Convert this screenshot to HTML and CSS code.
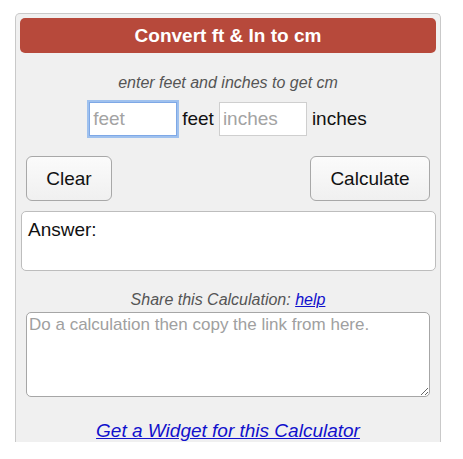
FILE: index.html
```html
<!DOCTYPE html>
<html lang="en">
<head>
<meta charset="utf-8">
<title>Convert ft &amp; in to cm</title>
<link rel="stylesheet" href="styles.css">
</head>
<body>
<div class="panel">
  <div class="title">Convert ft &amp; In to cm</div>
  <div class="hint">enter feet and inches to get cm</div>
  <div class="inputs">
    <input class="field focused" type="text" placeholder="feet">
    <span class="unit">feet</span>
    <input class="field" type="text" placeholder="inches">
    <span class="unit">inches</span>
  </div>
  <div class="buttons">
    <button class="btn btn-clear" type="button">Clear</button>
    <button class="btn btn-calc" type="button">Calculate</button>
  </div>
  <div class="answer">Answer:</div>
  <div class="share">Share this Calculation: <a href="#" class="link">help</a></div>
  <textarea class="sharebox" placeholder="Do a calculation then copy the link from here."></textarea>
  <div class="widget"><a href="#" class="link">Get a Widget for this Calculator</a></div>
</div>
</body>
</html>
```

FILE: styles.css
```css
html, body {
  margin: 0;
  padding: 0;
  background: #ffffff;
}

body {
  font-family: "Liberation Sans", Arial, Helvetica, sans-serif;
  color: #111;
}

.panel {
  box-sizing: border-box;
  margin: 13px 0 0 15px;
  width: 426px;
  height: 429px;
  padding: 4px;
  background: #f0f0f0;
  border: 1px solid #c9c9c9;
  border-bottom: none;
  border-radius: 5px 5px 0 0;
  overflow: hidden;
  display: flex;
  flex-direction: column;
}

.title {
  flex: none;
  height: 35px;
  line-height: 35px;
  background: #b7493b;
  border-radius: 5px;
  color: #ffffff;
  font-weight: bold;
  font-size: 19px;
  text-align: center;
}

.hint {
  flex: none;
  margin-top: 21px;
  font-size: 16px;
  line-height: 18px;
  font-style: italic;
  color: #555;
  text-align: center;
}

.inputs {
  margin-top: 10px;
  display: flex;
  justify-content: center;
  align-items: center;
  gap: 5px;
  height: 34px;
  flex: none;
}

.field {
  box-sizing: border-box;
  width: 88px;
  height: 34px;
  padding: 0 3px;
  border: 1px solid #cfcfcf;
  background: #fff;
  font-family: "Liberation Sans", Arial, sans-serif;
  font-size: 19px;
  color: #222;
  outline: none;
}

.field::placeholder {
  color: #a3a3a3;
}

.focused {
  border: 1px solid #7ea8e6;
  box-shadow: 0 0 0 2px #9fc1ee;
}

.unit {
  font-size: 19px;
}

.buttons {
  margin-top: 20px;
  padding: 0 6px;
  display: flex;
  justify-content: space-between;
  flex: none;
}

.btn {
  box-sizing: border-box;
  height: 45px;
  border: 1px solid #a8a8a8;
  border-radius: 6px;
  background: linear-gradient(#fbfbfb, #f0f0f0);
  font-family: "Liberation Sans", Arial, sans-serif;
  font-size: 19px;
  color: #111;
  padding: 0;
}

.btn-clear {
  width: 86px;
}

.btn-calc {
  width: 120px;
}

.answer {
  flex: none;
  box-sizing: border-box;
  margin: 10px 0 0 1px;
  height: 60px;
  padding: 8px 6px;
  background: #fff;
  border: 1px solid #bdbdbd;
  border-radius: 5px;
  font-size: 19px;
  line-height: 20px;
}

.share {
  flex: none;
  margin-top: 20px;
  font-size: 16px;
  line-height: 18px;
  font-style: italic;
  color: #555;
  text-align: center;
}

.link {
  color: #1111cc;
  text-decoration: underline;
}

.sharebox {
  flex: none;
  box-sizing: border-box;
  display: block;
  margin: 3px 6px 0 6px;
  width: 404px;
  height: 85px;
  padding: 2px;
  border: 1px solid #a6a6a6;
  border-radius: 5px;
  background: #fff;
  font-family: "Liberation Sans", Arial, sans-serif;
  font-size: 17px;
  color: #222;
  outline: none;
  resize: vertical;
}

.sharebox::placeholder {
  color: #a0a0a0;
}

.widget {
  flex: none;
  margin-top: 23px;
  font-size: 19px;
  line-height: 22px;
  font-style: italic;
  text-align: center;
}
```
